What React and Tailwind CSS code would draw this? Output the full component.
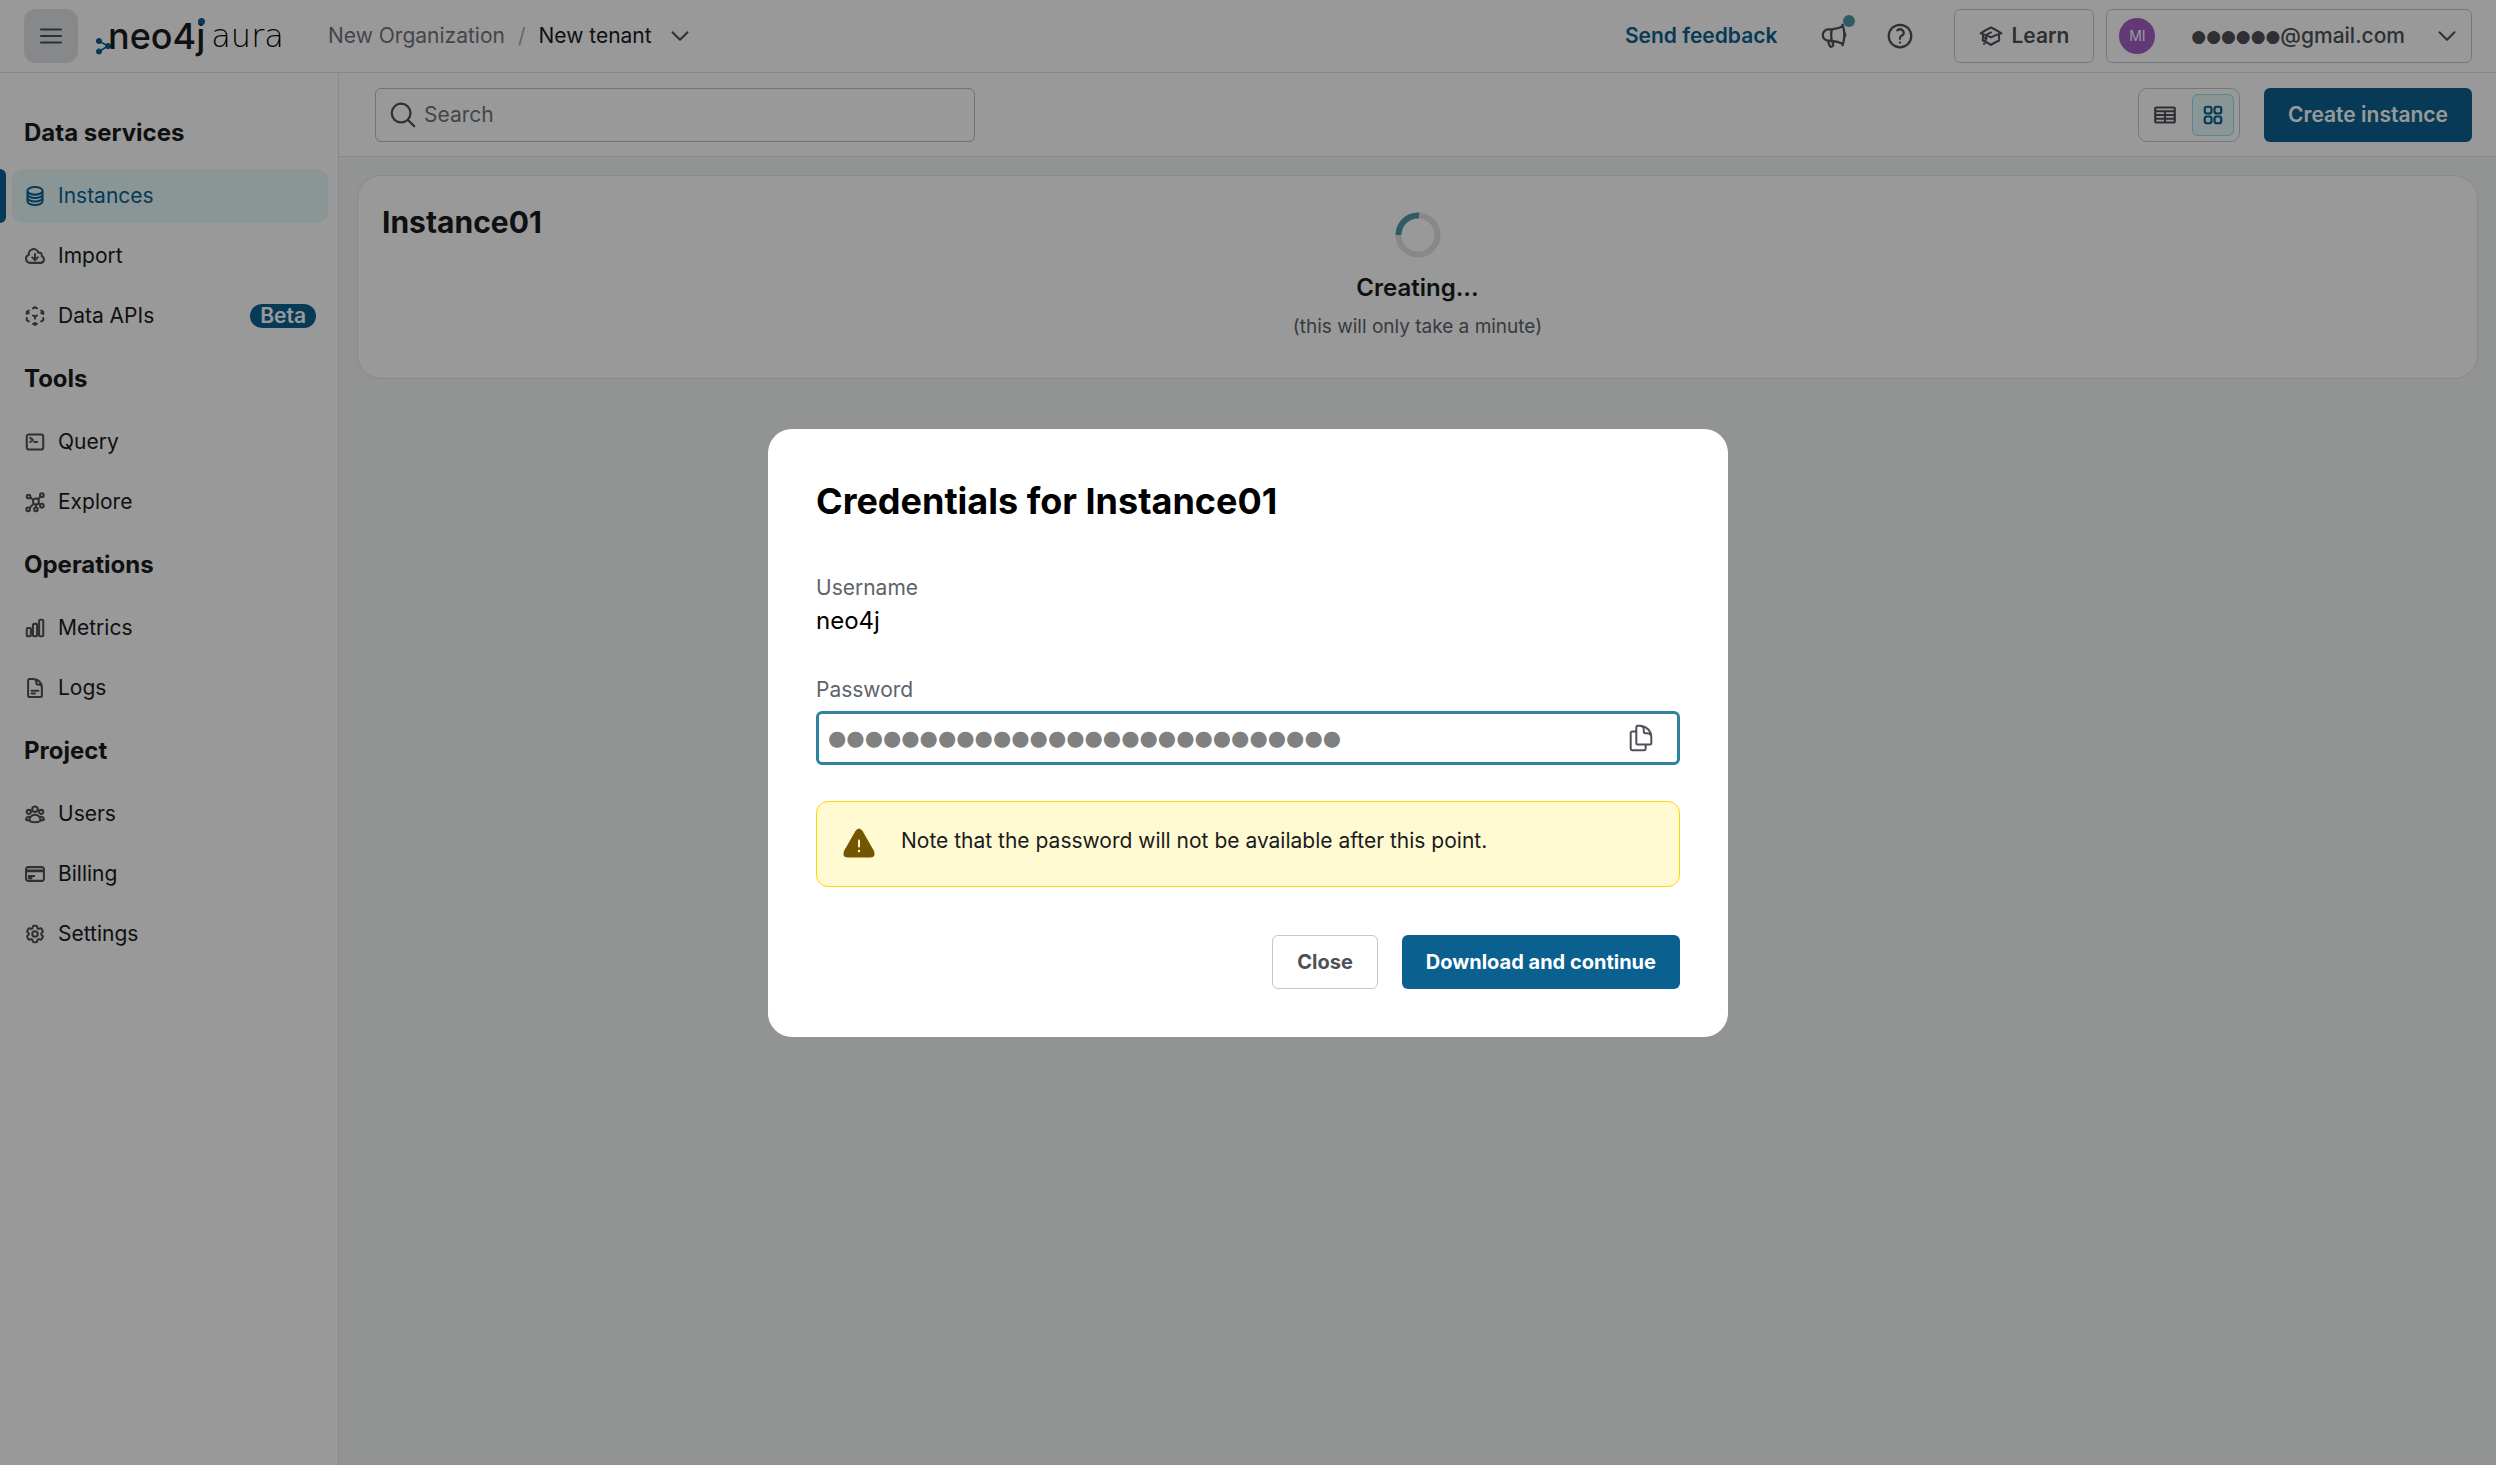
import React from "react";
import {
  HiOutlineAcademicCap,
  HiOutlineChartBar,
  HiOutlineChevronDown,
  HiOutlineCircleStack,
  HiOutlineCloudArrowDown,
  HiOutlineCog6Tooth,
  HiOutlineCommandLine,
  HiOutlineCreditCard,
  HiOutlineCubeTransparent,
  HiOutlineDocumentDuplicate,
  HiOutlineDocumentText,
  HiOutlineMagnifyingGlass,
  HiOutlineMegaphone,
  HiOutlineQuestionMarkCircle,
  HiOutlineSquares2X2,
  HiOutlineTableCells,
  HiOutlineUserGroup,
} from "react-icons/hi2";

function ExploreIcon({ className }) {
  return (
    <svg viewBox="0 0 24 24" fill="none" stroke="currentColor" strokeWidth="2.2" className={className} aria-hidden="true">
      <circle cx="13" cy="11.5" r="3.2" />
      <circle cx="5" cy="6" r="2" />
      <circle cx="19.5" cy="4.5" r="2" />
      <circle cx="19.5" cy="16" r="2" />
      <circle cx="4.5" cy="20" r="2" />
      <circle cx="13" cy="20" r="2" />
      <path d="M6.8 7.1 10.2 9.8M18 6 15.3 9.2M17.7 14.9 15.8 13.4M6 18.6 10.6 13.8M13 18v-3.2" />
    </svg>
  );
}

const SECTIONS = [
  {
    title: "Data services",
    items: [
      { label: "Instances", icon: HiOutlineCircleStack, active: true },
      { label: "Import", icon: HiOutlineCloudArrowDown },
      { label: "Data APIs", icon: HiOutlineCubeTransparent, badge: "Beta" },
    ],
  },
  {
    title: "Tools",
    items: [
      { label: "Query", icon: HiOutlineCommandLine },
      { label: "Explore", icon: ExploreIcon },
    ],
  },
  {
    title: "Operations",
    items: [
      { label: "Metrics", icon: HiOutlineChartBar },
      { label: "Logs", icon: HiOutlineDocumentText },
    ],
  },
  {
    title: "Project",
    items: [
      { label: "Users", icon: HiOutlineUserGroup },
      { label: "Billing", icon: HiOutlineCreditCard },
      { label: "Settings", icon: HiOutlineCog6Tooth },
    ],
  },
];

function Logo() {
  return (
    <span className="flex items-center">
      <svg viewBox="0 0 16 20" className="mt-5 -mr-1 h-5 w-4 shrink-0" fill="#0A6190" stroke="#0A6190" aria-hidden="true">
        <path d="M3 5 12 10 3 15.500" fill="none" strokeWidth="1.500" />
        <circle cx="3" cy="5" r="2.600" />
        <circle cx="12" cy="10" r="2.600" />
        <circle cx="3" cy="15.500" r="2.600" />
      </svg>
      <span className="relative text-[36px] leading-10 font-medium">
        neo4j
        <span className="absolute top-0.5 right-0 size-[7px] rounded-full bg-[#0A6190]" />
      </span>
      <span className="ml-1.5 font-['DejaVu_Sans',sans-serif] text-[32px] leading-10 font-extralight text-black">aura</span>
    </span>
  );
}

function Header() {
  return (
    <header className="flex items-center border-b border-[#E2E3E5] px-6 py-[9px]">
      <button type="button" aria-label="Menu" className="flex size-[54px] items-center justify-center rounded-xl bg-[#E2E3E5]">
        <svg viewBox="0 0 24 18" className="h-[18px] w-6" fill="none" stroke="#4D5157" strokeWidth="2" strokeLinecap="round" aria-hidden="true">
          <path d="M2 2.500h20M2 9h20M2 15.500h20" />
        </svg>
      </button>
      <a href="#home" className="ml-[18px] w-48">
        <Logo />
      </a>
      <nav aria-label="Breadcrumb" className="ml-10 flex items-center gap-[13px]">
        <a href="#org" className="text-[#6F757E]">New Organization</a>
        <span className="text-[#A8ACB2]">/</span>
        <button type="button" className="flex items-center gap-4">
          New tenant
          <HiOutlineChevronDown className="size-6 text-[#4D5157]" strokeWidth="2" />
        </button>
      </nav>
      <div className="ml-auto flex items-center">
        <a href="#feedback" className="font-semibold text-[#0A6190]">Send feedback</a>
        <button type="button" aria-label="Announcements" className="relative ml-[42px] text-[#4D5157]">
          <HiOutlineMegaphone className="size-[30px]" strokeWidth="1.8" />
          <span className="absolute -top-1.5 -right-1.5 size-3 rounded-full bg-[#4C99A4]" />
        </button>
        <button type="button" aria-label="Help" className="ml-9 text-[#4D5157]">
          <HiOutlineQuestionMarkCircle className="size-[30px]" strokeWidth="1.8" />
        </button>
        <button type="button" className="ml-[39px] flex h-[54px] items-center gap-2 rounded-md border border-[#C4C8CD] px-6 font-semibold text-[#4D5157]">
          <HiOutlineAcademicCap className="size-6" strokeWidth="2" />
          Learn
        </button>
        <button type="button" className="ml-3 flex h-[54px] items-center rounded-md border border-[#C4C8CD] pr-3 pl-3 font-medium text-[#4D5157]">
          <span className="flex size-9 items-center justify-center rounded-full bg-[#A35EC6] text-[14px] font-normal text-white">MI</span>
          <span className="ml-9 flex items-center">
            <span className="font-['DejaVu_Sans',sans-serif] text-[17px]">●●●●●●</span>@gmail.com
          </span>
          <HiOutlineChevronDown className="ml-[30px] size-6" strokeWidth="2" />
        </button>
      </div>
    </header>
  );
}

function Sidebar() {
  return (
    <nav aria-label="Main" className="flex w-[339px] shrink-0 flex-col gap-[18px] border-r border-[#E2E3E5] pt-[42px] pr-2.5">
      {SECTIONS.map((section) => (
        <section key={section.title} className="flex flex-col gap-[18px]">
          <h2 className="pl-6 text-[24px] leading-9 font-bold">{section.title}</h2>
          <ul className="flex flex-col gap-1.5">
            {section.items.map(({ label, icon: Icon, active, badge }) => (
              <li key={label} className="flex gap-1.5">
                <span className={active ? "w-1.5 rounded-r-md bg-[#0A6190]" : "w-1.5"} />
                <a
                  href={"#" + label}
                  className={
                    active
                      ? "flex h-[54px] flex-1 items-center gap-3 rounded-xl bg-[#E7FAFB] px-3 text-[#0A6190]"
                      : "flex h-[54px] flex-1 items-center gap-3 rounded-xl px-3"
                  }
                >
                  <Icon className={active ? "size-[22px]" : "size-[22px] text-[#4D5157]"} strokeWidth="2.2" />
                  {label}
                  {badge && (
                    <span className="ml-auto rounded-full bg-[#0A6190] px-2.5 leading-6 font-semibold text-white">{badge}</span>
                  )}
                </a>
              </li>
            ))}
          </ul>
        </section>
      ))}
    </nav>
  );
}

function Toolbar() {
  return (
    <div className="flex items-center border-b border-[#E2E3E5] bg-white pt-[15px] pr-6 pb-[14px] pl-9">
      <label className="flex h-[54px] w-[600px] items-center gap-1.5 rounded-md border border-[#BBBEC3] pl-3 text-[#4D5157]">
        <HiOutlineMagnifyingGlass className="size-[30px] shrink-0" strokeWidth="1.8" />
        <input type="search" aria-label="Search" placeholder="Search" className="w-full bg-transparent outline-none placeholder:text-[#6F757E]" />
      </label>
      <div className="ml-auto flex h-[54px] items-center rounded-[9px] border border-[#C4C8CD] px-[5px]">
        <button type="button" aria-label="Table view" className="flex size-[42px] items-center justify-center text-[#4D5157]">
          <HiOutlineTableCells className="size-6" strokeWidth="2.2" />
        </button>
        <button type="button" aria-label="Card view" className="ml-1.5 flex size-[42px] items-center justify-center rounded-md border border-[#8FE3E8] bg-[#E7FAFB] text-[#0A6190]">
          <HiOutlineSquares2X2 className="size-6" strokeWidth="2.2" />
        </button>
      </div>
      <button type="button" className="ml-6 h-[54px] rounded-md bg-[#0A6190] px-6 font-semibold text-white">Create instance</button>
    </div>
  );
}

function InstanceCard() {
  return (
    <article className="m-[18px] grid grid-cols-[1fr_auto_1fr] rounded-3xl border border-[#E2E3E5] bg-white px-6 pt-6 pb-9">
      <h3 className="text-[30px] leading-[45px] font-bold">Instance01</h3>
      <div className="flex flex-col items-center pt-3" role="status">
        <svg viewBox="0 0 46 46" className="size-[46px]" fill="none" strokeWidth="6" aria-hidden="true">
          <circle cx="23" cy="23" r="19.500" stroke="#E2E3E5" />
          <path d="M3.500 23A19.500 19.500 0 0 1 24 3.500" stroke="#4C99A4" />
        </svg>
        <p className="mt-3 text-[24px] leading-9 font-semibold">Creating...</p>
        <p className="mt-1.5 text-[19px] leading-[30px] text-[#5E636A]">(this will only take a minute)</p>
      </div>
    </article>
  );
}

function CredentialsDialog() {
  return (
    <div className="fixed inset-0 flex items-center justify-center bg-black/40">
      <div role="dialog" aria-modal="true" aria-labelledby="dialog-title" className="w-full max-w-[960px] rounded-3xl bg-white p-12">
        <h1 id="dialog-title" className="text-[36px] leading-[48px] font-bold text-black">Credentials for Instance01</h1>
        <dl className="mt-12">
          <dt className="leading-[30px] text-[#5E636A]">Username</dt>
          <dd className="text-[24px] leading-9 text-black">neo4j</dd>
        </dl>
        <label htmlFor="password" className="mt-9 block leading-[30px] text-[#5E636A]">Password</label>
        <div className="mt-1.5 flex h-[54px] items-center rounded-md border-3 border-[#30839D] pr-[21px] pl-[9px]">
          <input
            id="password"
            type="text"
            readOnly
            value="●●●●●●●●●●●●●●●●●●●●●●●●●●●●"
            className="min-w-0 flex-1 bg-transparent font-['DejaVu_Sans',sans-serif] text-[21px] text-[#808080] outline-none"
          />
          <button type="button" aria-label="Copy password" className="text-[#4D5157]">
            <HiOutlineDocumentDuplicate className="size-[30px]" strokeWidth="1.600" />
          </button>
        </div>
        <div role="alert" className="mt-9 flex gap-6 rounded-xl border border-[#FFD600] bg-[#FFFAD1] px-6 py-6">
          <svg viewBox="0 0 36 36" className="size-9 shrink-0" aria-hidden="true">
            <path d="M14.300 5.200Q18 0 21.700 5.200L33 25Q35 31.500 29.500 31.500H6.500Q1 31.500 3 25Z" fill="#765500" />
            <path d="M18 14.500v6" stroke="#FFFAD1" strokeWidth="2" strokeLinecap="round" />
            <circle cx="18" cy="25" r="1.200" fill="#FFFAD1" />
          </svg>
          <p className="leading-[30px]">Note that the password will not be available after this point.</p>
        </div>
        <div className="mt-12 flex justify-end gap-6 text-[20px]">
          <button type="button" className="h-[54px] rounded-md border border-[#C4C8CD] px-6 font-bold text-[#4D5157]">Close</button>
          <button type="button" className="h-[54px] rounded-md bg-[#0A6190] px-6 font-bold text-white">Download and continue</button>
        </div>
      </div>
    </div>
  );
}

export default function App() {
  return (
    <div className="flex min-h-screen flex-col bg-white font-['Inter',sans-serif] text-[21px] leading-[30px] text-[#1A1B1D]">
      <Header />
      <div className="flex flex-1">
        <Sidebar />
        <main className="flex flex-1 flex-col bg-[#F3F7F5]">
          <Toolbar />
          <InstanceCard />
        </main>
      </div>
      <CredentialsDialog />
    </div>
  );
}
